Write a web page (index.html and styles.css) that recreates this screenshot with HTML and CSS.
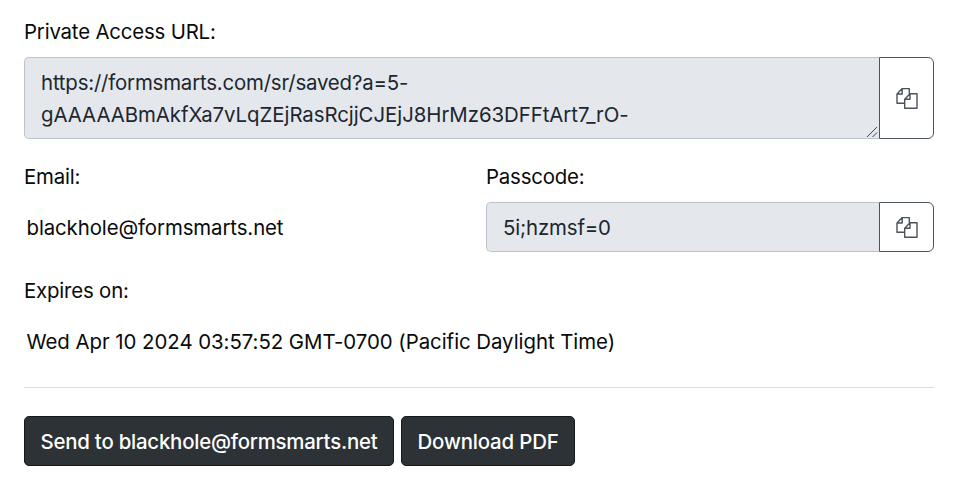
FILE: index.html
```html
<!DOCTYPE html>
<html lang="en">
<head>
<meta charset="utf-8">
<title>Private Access</title>
<link rel="stylesheet" href="styles.css">
</head>
<body>
<svg class="defs" aria-hidden="true"><symbol id="copy" viewBox="0 0 22 22"><path d="M8.7 16.3H1V7L6.2 1.6H13.3V6.8M6.2 1.6V7H1M8.7 12.2L14 6.8H21V21.2H8.7ZM14 6.8V12.2H8.7"/></symbol></svg>
<main class="panel">
  <section class="field">
    <div class="label l-url">Private Access URL:</div>
    <div class="group tall">
      <div class="input"><span class="u1">https://formsmarts.com/sr/saved?a=5-</span><br><span class="u2">gAAAAABmAkfXa7vLqZEjRasRcjjCJEjJ8HrMz63DFFtArt7_rO-</span>
        <svg class="grip" viewBox="0 0 12 12"><path d="M1 11L11 1M6.5 11L11 6.5"/></svg>
      </div>
      <button class="copy" aria-label="Copy"><svg><use href="#copy"/></svg></button>
    </div>
  </section>
  <div class="row">
    <section class="field">
      <div class="label l-email">Email:</div>
      <div class="plain p-email">blackhole@formsmarts.net</div>
    </section>
    <section class="field">
      <div class="label l-pass">Passcode:</div>
      <div class="group">
        <div class="input"><span class="code">5i;hzmsf=0</span></div>
        <button class="copy" aria-label="Copy"><svg><use href="#copy"/></svg></button>
      </div>
    </section>
  </div>
  <section class="field">
    <div class="label l-exp">Expires on:</div>
    <div class="plain p-date">Wed Apr 10 2024 03:57:52 GMT-0700 (Pacific Daylight Time)</div>
  </section>
  <hr>
  <div class="actions">
    <button class="btn send"><span>Send to blackhole@formsmarts.net</span></button>
    <button class="btn pdf"><span>Download PDF</span></button>
  </div>
</main>
</body>
</html>
```
FILE: styles.css
```css
* { box-sizing: border-box; }
body { margin: 0; background: #fff; color: #080a0c; font: 20.4px/32px Inter, "Liberation Sans", sans-serif; }
.defs { position: absolute; width: 0; height: 0; }
.panel { padding: 15px 24px 0; }
.label { height: 32px; margin-bottom: 10px; padding-top: 1px; letter-spacing: -0.18px; white-space: nowrap; }
.group { display: flex; height: 50px; }
.group.tall { height: 82px; }
.input { position: relative; flex: 1; padding: 9px 16px 7px; border: 1px solid #bcc3cb; border-right: 0; border-radius: 5px 0 0 5px; background: #e4e8ed; color: #20262d; white-space: nowrap; }
.group.tall .input { padding-top: 8.5px; }
.u1 { letter-spacing: -0.18px; }
.u2 { letter-spacing: -0.05px; }
.code { letter-spacing: -0.15px; }
.copy { display: flex; align-items: center; justify-content: center; width: 55px; padding: 0; border: 1px solid #4b535b; border-radius: 0 6px 6px 0; background: #fff; }
.copy svg { width: 22px; height: 22px; fill: none; stroke: #4b535b; stroke-width: 1.4; stroke-linejoin: round; }
.grip { position: absolute; right: 1px; bottom: 0; width: 12px; height: 12px; fill: none; stroke: #3c4248; stroke-width: 1; }
.row { display: grid; grid-template-columns: 448px 448px; column-gap: 14px; margin: 21px 0 22px; }
.plain { height: 50px; padding: 10px 2.5px 8px; white-space: nowrap; }
.p-email { letter-spacing: -0.1px; }
.p-date { letter-spacing: -0.04px; }
hr { height: 1px; margin: 21px 0 28px; border: 0; background: #dcddde; }
.actions { display: flex; gap: 7px; }
.btn { height: 50px; padding: 2px 15.5px 0; border: 1px solid #16191c; border-radius: 5px; background: #2d3236; color: #fff; font: inherit; font-weight: 500; text-align: left; white-space: nowrap; }
.send { width: 370px; letter-spacing: -0.22px; }
.pdf { width: 174px; letter-spacing: -0.15px; }
```
